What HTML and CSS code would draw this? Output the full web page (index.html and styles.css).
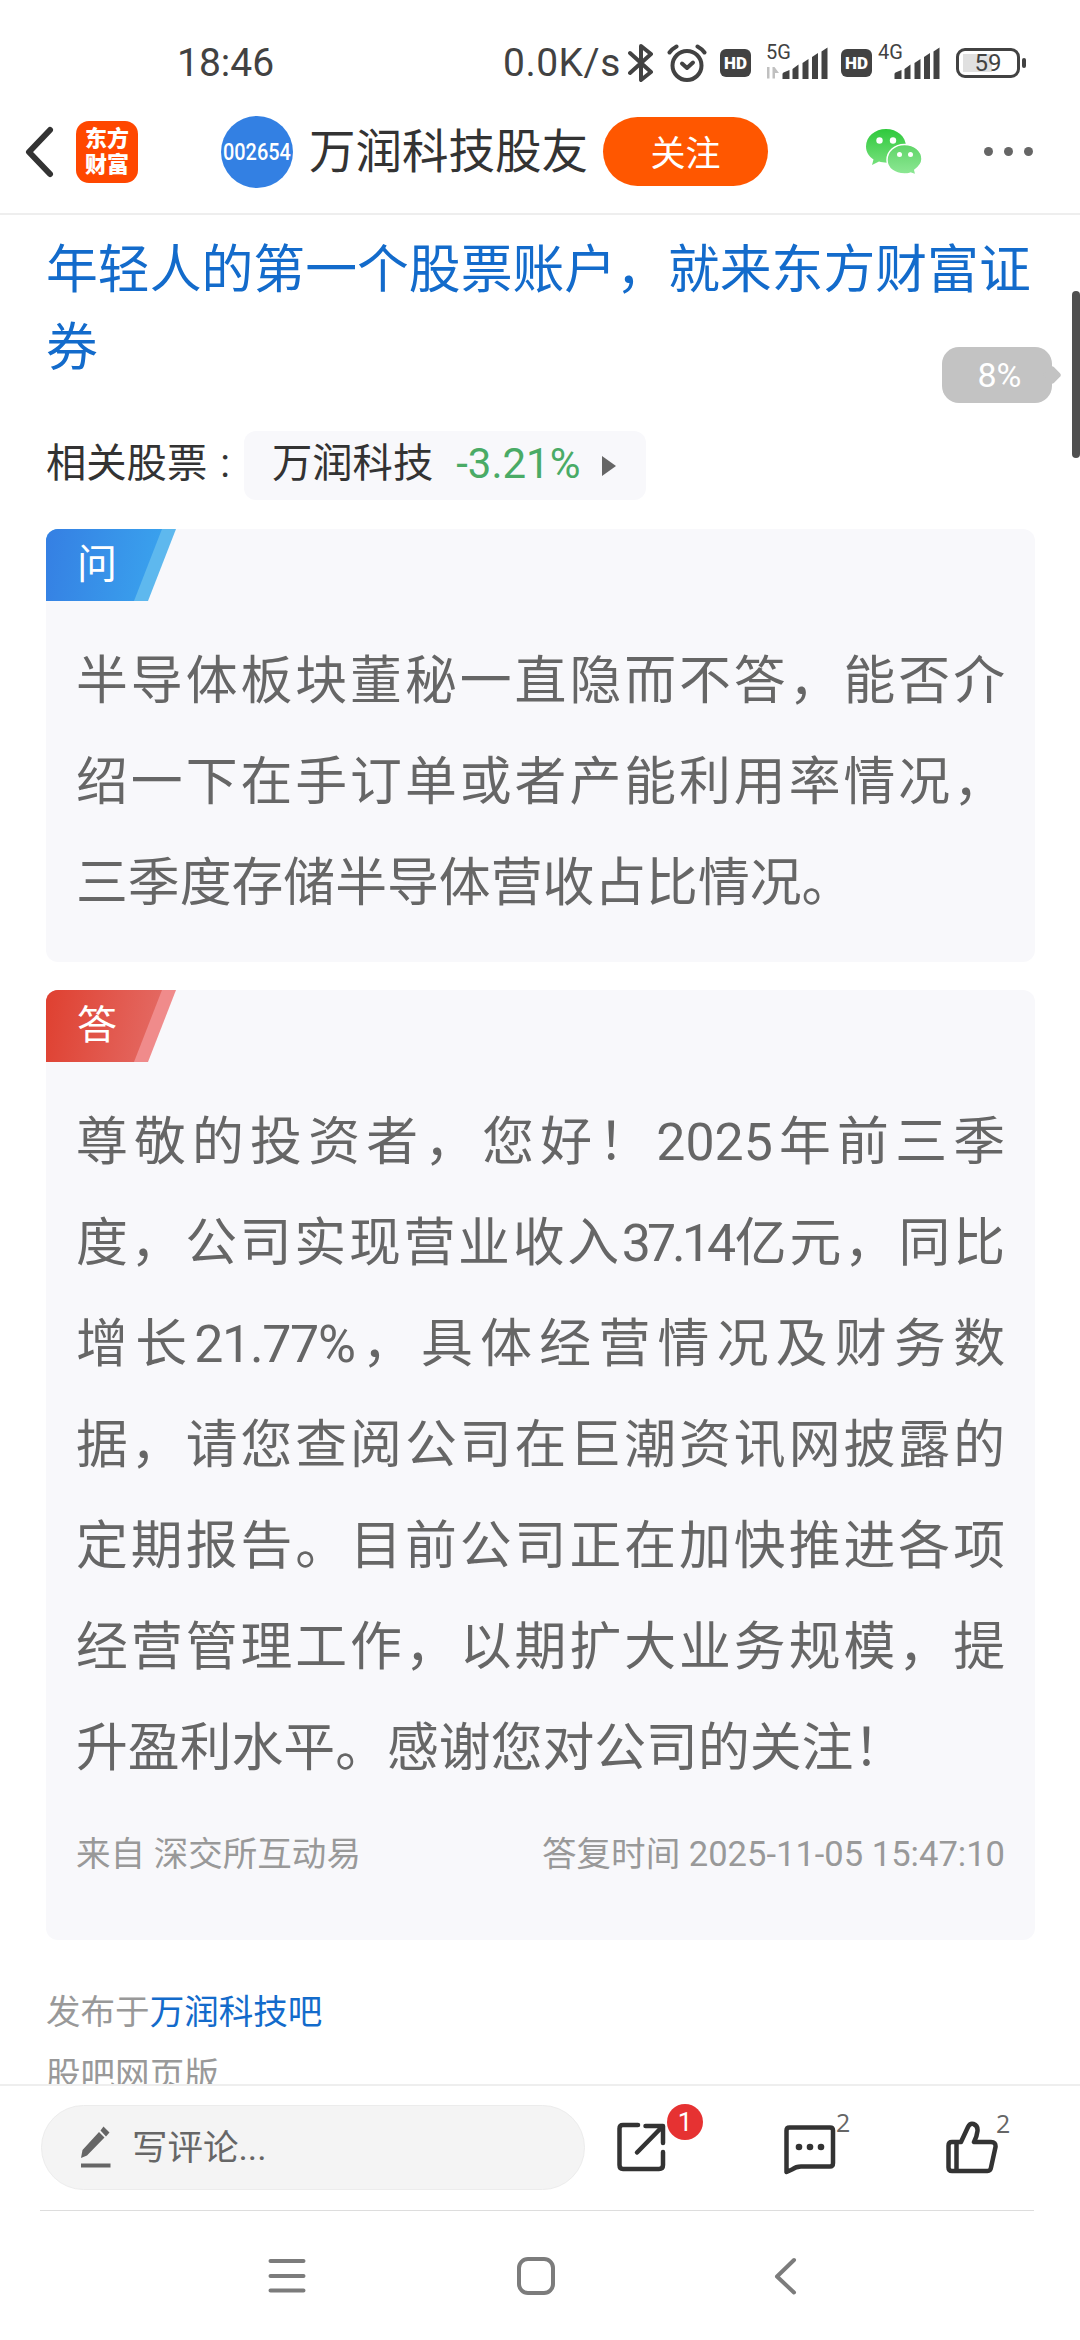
FILE: index.html
```
<!DOCTYPE html>
<html lang="zh-CN">

<head>
    <meta charset="UTF-8">
    <meta name="viewport" content="width=device-width, initial-scale=1.0">
    <title>万润科技股友</title>
    <link rel="stylesheet" href="styles.css">
</head>

<body>
    <!-- 状态栏 -->
    <div class="status">
        <span class="time">18:46</span>
        <span class="speed">0.0K/s</span>
        <svg class="bt" width="26" height="40" viewBox="0 0 26 40">
            <path d="M2 10L23 29L13 37V3L23 11L2 30" />
        </svg>
        <svg class="alarm" width="40" height="38" viewBox="0 0 40 38">
            <circle cx="20" cy="21.500" r="14.500" />
            <path d="M2.500 8.500Q5 5 9.500 2.500M37.500 8.500Q35 5 30.500 2.500" />
            <path d="M15 19.500L20 24L26 18.500" />
        </svg>
        <span class="hd">HD</span>
        <div class="signal">
            <span>5G</span>
            <svg width="68" height="38" viewBox="0 0 68 38">
                <path class="arrows" d="M0 32L4 37.500V26H6.500V37.500H4zM9.500 37.500V26H11.500L16 32H12V37.500z" />
                <path d="M10 38v-5q0-1 1-1.500l6-2.500v9zM20 38V28l6-4.500V38zM30 38V22l6-4V38zM39.500 38V16l6-4V38zM49 38V10.500l6-4V38z" transform="translate(9.500 0)" />
            </svg>
        </div>
        <span class="hd hd2">HD</span>
        <div class="signal signal2">
            <span>4G</span>
            <svg width="68" height="38" viewBox="0 0 68 38">
                <path d="M10 38v-5q0-1 1-1.500l6-2.500v9zM20 38V28l6-4.500V38zM30 38V22l6-4V38zM39.500 38V16l6-4V38zM49 38V10.500l6-4V38z" transform="translate(9.500 0)" />
            </svg>
        </div>
        <div class="battery">59</div>
    </div>

    <!-- 顶部导航 -->
    <div class="header">
        <svg class="back" width="32" height="54" viewBox="0 0 32 54">
            <path d="M26 5L5 27L26 49" />
        </svg>
        <div class="logo">东方<br>财富</div>
        <div class="avatar"><span>002654</span></div>
        <h1>万润科技股友</h1>
        <button class="follow">关注</button>
        <svg class="wechat" width="56" height="46" viewBox="0 0 56 46">
            <defs>
                <linearGradient id="g1" x1="0" y1="0" x2="0" y2="1">
                    <stop offset="0" stop-color="#2fc93c" />
                    <stop offset="1" stop-color="#76e07c" />
                </linearGradient>
                <linearGradient id="g2" x1="0" y1="0" x2="0" y2="1">
                    <stop offset="0" stop-color="#5fd467" />
                    <stop offset="1" stop-color="#8ee895" />
                </linearGradient>
            </defs>
            <path fill="url(#g1)" d="M20 0C9 0 0 7.600 0 17.500c0 5.500 3 10 7.500 13L6 36l7-3.500c9 3 27 1 27-15C40 7.600 31 0 20 0z" />
            <path fill="url(#g2)" stroke="#fff" stroke-width="1.500" d="M38.500 15.500c-10 0-17.500 7-17.500 15.500S28.500 45 38.500 45c2.200 0 4.200-.3 6-.9L50 46l-1.200-5C53 38 56 34 56 30c0-8.300-7.500-14.500-17.500-14.500z" />
            <circle cx="13.500" cy="11.500" r="3.200" fill="#fff" />
            <circle cx="27" cy="11.500" r="3.200" fill="#fff" />
            <circle cx="33.500" cy="25.500" r="2.500" fill="#fff" />
            <circle cx="44.500" cy="25.500" r="2.500" fill="#fff" />
        </svg>
        <div class="more"><i></i><i></i><i></i></div>
    </div>

    <!-- 正文 -->
    <div class="article">
        <a class="ad">年轻人的第一个股票账户，就来东方财富证券</a>

        <div class="related">
            <span class="label">相关股票 :</span>
            <div class="stock">
                <span>万润科技</span>
                <span class="down">-3.21%</span>
                <i class="tri"></i>
            </div>
        </div>

        <div class="card">
            <div class="tag ask"><span>问</span></div>
            <p>半导体板块董秘一直隐而不答，能否介绍一下在手订单或者产能利用率情况，三季度存储半导体营收占比情况。</p>
        </div>

        <div class="card">
            <div class="tag answer"><span>答</span></div>
            <p>尊敬的投资者，您好！2025年前三季度，公司实现营业收入<span class="num">37.14</span>亿元，同比增长<span class="rate">21.77%</span>，具体经营情况及财务数据，请您查阅公司在巨潮资讯网披露的定期报告。目前公司正在加快推进各项经营管理工作，以期扩大业务规模，提升盈利水平。感谢您对公司的关注！</p>
            <div class="meta">
                <span>来自 深交所互动易</span>
                <span>答复时间 2025-11-05 15:47:10</span>
            </div>
        </div>

        <div class="from">发布于<a>万润科技吧</a></div>
        <div class="from">股吧网页版</div>
    </div>

    <!-- 评论栏 -->
    <div class="toolbar">
        <div class="input">
            <svg width="30" height="42" viewBox="0 0 30 42">
                <path d="M0 32L1.500 24L18 6L23.500 11.500L6 29.500zM19.500 4.500L22.500 0.500L28.500 6.500L25 10.500z" />
                <path d="M0 37.500h29.500v4H0z" />
            </svg>
            <span>写评论...</span>
        </div>
        <div class="tool share">
            <svg width="50" height="52" viewBox="0 0 50 52">
                <path d="M21 4H6Q2.500 4 2.500 7.500V44Q2.500 48 6 48H42Q46 48 46 44V31" />
                <path d="M28.500 5H46V22M45 6L20 31.500" />
            </svg>
            <span class="badge">1</span>
        </div>
        <div class="tool comment">
            <svg width="52" height="52" viewBox="0 0 52 52">
                <path d="M2.500 7.500Q2.500 4.500 5.500 4.500H46Q49 4.500 49 7.500V40Q49 43.500 46 43.500H17Q12 43.500 8 46.500L2.500 49z" />
                <circle cx="15" cy="24" r="3.300" />
                <circle cx="26" cy="24" r="3.300" />
                <circle cx="37" cy="24" r="3.300" />
            </svg>
            <span class="count">2</span>
        </div>
        <div class="tool like">
            <svg width="52" height="54" viewBox="0 0 52 54">
                <path d="M15 22L22 7Q24 3 27.500 4Q32 5.500 31.500 11Q31 16 28 22H45Q50 22 49.500 27L45 47.500Q44.500 51 41.500 51H6Q2.500 51 2.500 47.500V25.500Q2.500 22 6 22H15M10.500 22V51" />
            </svg>
            <span class="count">2</span>
        </div>
    </div>

    <!-- 系统按键 -->
    <div class="nav">
        <svg width="38" height="38" viewBox="0 0 38 38">
            <path d="M2.500 4H35.500M2.500 19H35.500M2.500 33.500H35.500" />
        </svg>
        <svg width="38" height="38" viewBox="0 0 38 38">
            <rect x="2" y="2" width="34" height="34" rx="9" />
        </svg>
        <svg width="38" height="38" viewBox="0 0 38 38">
            <path d="M28 3L11 19.500L28 35.500" />
        </svg>
    </div>

    <!-- 阅读进度 -->
    <div class="progress">8%</div>
    <div class="scrollbar"></div>
</body>

</html>
```
FILE: styles.css
```
* {
    margin: 0;
    padding: 0;
    box-sizing: border-box;
}

body {
    width: 1080px;
    height: 2340px;
    display: flex;
    flex-direction: column;
    position: relative;
    overflow: hidden;
    background: #fff;
    color: #333;
    font-family: Roboto, "Noto Sans CJK SC", sans-serif;
    text-spacing-trim: space-all;
}

svg {
    display: block;
    flex: none;
}

/* 状态栏 */
.status {
    height: 90px;
    padding: 35px 0 0 177px;
    display: flex;
    align-items: center;
    color: #424242;
    flex: none;
}

.time {
    width: 326px;
    font-size: 39px;
}

.speed {
    width: 125px;
    font-size: 39px;
    letter-spacing: 0.5px;
}

.bt,
.alarm {
    fill: none;
    stroke: #424242;
    stroke-width: 4px;
    stroke-linejoin: round;
    stroke-linecap: round;
}

.alarm {
    margin-left: 13px;
}

.hd {
    width: 31px;
    height: 28px;
    margin-left: 13px;
    border-radius: 6px;
    background: #424242;
    color: #fff;
    font-size: 17px;
    font-weight: 900;
    line-height: 28px;
    text-align: center;
    flex: none;
}

.signal {
    width: 68px;
    height: 38px;
    margin-left: 12px;
    position: relative;
    top: -3px;
    fill: #424242;
}

.signal span {
    position: absolute;
    left: 3px;
    top: -1px;
    font-size: 20px;
    line-height: 24px;
}

.signal .arrows {
    fill: #c0c0c0;
}

.hd2 {
    margin-left: 10px;
}

.signal2 {
    margin-left: 3px;
}

.battery {
    width: 64px;
    height: 30px;
    margin-left: 13px;
    border: 3px solid #424242;
    border-radius: 9px;
    background: linear-gradient(#e0e0e0, #e0e0e0) 4px 3px / 29px 18px no-repeat;
    font-size: 24px;
    line-height: 25px;
    text-align: center;
    position: relative;
}

.battery::after {
    content: "";
    position: absolute;
    right: -9px;
    top: 7px;
    width: 4px;
    height: 10px;
    border-radius: 2px;
    background: #424242;
}

/* 顶部导航 */
.header {
    height: 125px;
    padding: 0 47px 0 24px;
    display: flex;
    align-items: center;
    border-bottom: 2px solid #eee;
    flex: none;
}

.back {
    fill: none;
    stroke: #333;
    stroke-width: 6px;
    stroke-linecap: round;
    stroke-linejoin: round;
}

.logo {
    width: 62px;
    height: 62px;
    margin-left: 20px;
    padding-top: 5px;
    border-radius: 13px;
    background: #ff4700;
    color: #fff;
    font-size: 22px;
    font-weight: 900;
    line-height: 26px;
    text-align: center;
}

.avatar {
    width: 72px;
    height: 72px;
    margin-left: 83px;
    border-radius: 50%;
    background: #3380e3;
    color: #fff;
    font-size: 24px;
    display: flex;
    align-items: center;
    justify-content: center;
}

.avatar span {
    font-weight: 500;
    transform: scaleX(0.83);
}

h1 {
    margin-left: 16px;
    font-size: 46.500px;
    font-weight: 400;
    line-height: 60px;
    white-space: nowrap;
}

.follow {
    width: 165px;
    height: 69px;
    margin-left: 15px;
    padding-bottom: 3px;
    border: none;
    border-radius: 35px;
    background: #ff5700;
    color: #fff;
    font-family: inherit;
    font-size: 35px;
    flex: none;
}

.wechat {
    margin-left: 98px;
}

.more {
    margin-left: auto;
    display: flex;
    gap: 11px;
}

.more i {
    width: 9px;
    height: 9px;
    border-radius: 50%;
    background: #666;
}

/* 正文 */
.article {
    flex: 1;
    min-height: 0;
    padding: 17px 45px 0 46px;
    overflow: hidden;
}

.ad {
    display: block;
    color: #136bcb;
    font-size: 51.840px;
    line-height: 77.500px;
}

.related {
    height: 69px;
    margin-top: 44px;
    display: flex;
    align-items: center;
    font-size: 40.300px;
    line-height: 64px;
    white-space: nowrap;
}

.label {
    width: 198px;
    padding-bottom: 4px;
    word-spacing: 3px;
}

.stock {
    width: 402px;
    height: 69px;
    padding: 0 0 4px 28px;
    display: flex;
    align-items: center;
    border-radius: 12px;
    background: #f8f8fb;
}

.down {
    margin-left: 23px;
    color: #4aab66;
    font-size: 42px;
}

.tri {
    margin: 4px 0 0 22px;
    border-left: 14px solid #666;
    border-top: 10px solid transparent;
    border-bottom: 10px solid transparent;
}

.card {
    margin-top: 29px;
    padding-bottom: 28px;
    border-radius: 12px;
    background: #f8f8fb;
    overflow: hidden;
}

.card + .card {
    margin-top: 28px;
    padding-bottom: 61px;
}

.tag {
    width: 130px;
    height: 72px;
    clip-path: polygon(0 0, 100% 0, 102px 100%, 0 100%);
}

.tag span {
    display: block;
    width: 116px;
    height: 72px;
    padding-left: 31px;
    clip-path: polygon(0 0, 100% 0, 88px 100%, 0 100%);
    color: #fff;
    font-size: 40px;
    line-height: 71px;
}

.ask {
    background: #5eb8ee;
}

.ask span {
    background: linear-gradient(100deg, #357fe3, #3aa4ee);
}

.answer {
    background: #f08b8b;
}

.answer span {
    background: linear-gradient(100deg, #df4030, #e46c66);
}

.card p {
    margin: 30px 30px 0;
    color: #666;
    font-size: 51.840px;
    line-height: 101px;
    text-align: justify;
}

.num {
    letter-spacing: -4px;
}

.rate {
    letter-spacing: -1.300px;
}

.meta {
    margin: 31px 30px 0;
    display: flex;
    justify-content: space-between;
    color: #999;
    font-size: 34.560px;
    line-height: 49px;
}

.meta + * {
    margin-top: 1px;
}

.from {
    color: #999;
    font-size: 34.560px;
    line-height: 63px;
}

.card + .from {
    margin-top: 41px;
}

.from a {
    color: #136bcb;
}

/* 评论栏 */
.toolbar {
    height: 126px;
    padding: 0 0 2px 41px;
    display: flex;
    align-items: center;
    border-top: 2px solid #eee;
    flex: none;
}

.input {
    width: 544px;
    height: 85px;
    padding-left: 39px;
    display: flex;
    align-items: center;
    border: 1px solid #ececec;
    border-radius: 43px;
    background: #f4f4f4;
    color: #666;
    font-size: 35.500px;
    fill: #666;
}

.input span {
    margin-left: 21px;
    padding-bottom: 6px;
}

.tool {
    position: relative;
    fill: none;
    stroke: #333;
    stroke-width: 4.500px;
    stroke-linejoin: round;
    stroke-linecap: round;
}

.share {
    margin-left: 32px;
}

.comment {
    margin-left: 117px;
    padding-top: 3px;
}

.comment circle {
    fill: #333;
    stroke: none;
}

.like {
    margin-left: 110px;
}

.badge {
    position: absolute;
    left: 50px;
    top: -17px;
    width: 36px;
    height: 36px;
    border-radius: 50%;
    background: #e63232;
    color: #fff;
    font-size: 26px;
    line-height: 36px;
    text-align: center;
}

.count {
    position: absolute;
    left: 52px;
    top: -13px;
    color: #666;
    font-size: 25px;
    font-family: "Open Sans", sans-serif;
    line-height: 30px;
}

.like .count {
    left: 50px;
    top: -12px;
}

/* 系统按键 */
.nav {
    width: 994px;
    height: 130px;
    margin-left: 40px;
    padding-left: 228px;
    display: flex;
    align-items: center;
    gap: 211px;
    border-top: 1px solid #ddd;
    fill: none;
    stroke: #7c7c7c;
    stroke-width: 4px;
    stroke-linecap: round;
    stroke-linejoin: round;
    flex: none;
}

/* 进度气泡和滚动条浮在正文上 */
.progress {
    position: absolute;
    left: 942px;
    top: 347px;
    width: 110px;
    height: 56px;
    padding-left: 5px;
    border-radius: 17px;
    background: #c3c3c3;
    color: #fff;
    font-size: 34px;
    line-height: 56px;
    text-align: center;
}

.progress::after {
    content: "";
    position: absolute;
    right: -7px;
    top: 21px;
    width: 14px;
    height: 14px;
    border-radius: 3px;
    background: #c3c3c3;
    transform: rotate(45deg);
}

.scrollbar {
    position: absolute;
    right: 0;
    top: 291px;
    width: 8px;
    height: 167px;
    border-radius: 4px;
    background: #4f4f4f;
}
```
